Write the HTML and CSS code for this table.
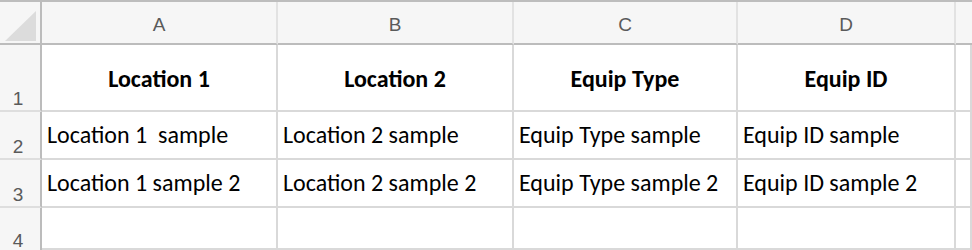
FILE: index.html
```html
<!DOCTYPE html>
<html>
<head>
<meta charset="utf-8">
<link rel="stylesheet" href="styles.css">
</head>
<body>
<div class="sheet">
  <div class="corner"><svg class="tri" width="31" height="30" viewBox="0 0 31 30"><polygon points="0,30 31,0 31,30" fill="#dcdcdc"/></svg></div>
  <div class="colhdr">A</div>
  <div class="colhdr">B</div>
  <div class="colhdr">C</div>
  <div class="colhdr">D</div>
  <div class="colhdr last"></div>

  <div class="rowhdr">1</div>
  <div class="cell head">Location 1</div>
  <div class="cell head">Location 2</div>
  <div class="cell head">Equip Type</div>
  <div class="cell head">Equip ID</div>
  <div class="cell"></div>

  <div class="rowhdr">2</div>
  <div class="cell data">Location 1  sample</div>
  <div class="cell data">Location 2 sample</div>
  <div class="cell data">Equip Type sample</div>
  <div class="cell data">Equip ID sample</div>
  <div class="cell"></div>

  <div class="rowhdr">3</div>
  <div class="cell data">Location 1 sample 2</div>
  <div class="cell data">Location 2 sample 2</div>
  <div class="cell data">Equip Type sample 2</div>
  <div class="cell data">Equip ID sample 2</div>
  <div class="cell"></div>

  <div class="rowhdr r4">4</div>
  <div class="cell"></div>
  <div class="cell"></div>
  <div class="cell"></div>
  <div class="cell"></div>
  <div class="cell"></div>
</div>
</body>
</html>
```

FILE: styles.css
```css
html, body {
  margin: 0;
  padding: 0;
  background: #ffffff;
  overflow: hidden;
}

.sheet {
  width: 972px;
  height: 250px;
  border-top: 2px solid #bdbdbd;
  box-sizing: border-box;
  display: grid;
  grid-template-columns: 42px 236px 236px 224px 218px 1fr;
  grid-template-rows: 43px 67px 48px 48px 42px;
  overflow: hidden;
}

.corner {
  background: #f6f6f6;
  border-right: 2px solid #bcbcbc;
  border-bottom: 2px solid #bcbcbc;
  box-sizing: border-box;
  display: flex;
  align-items: flex-end;
  justify-content: flex-end;
  padding: 0 4px 2px 0;
}

.tri {
  display: block;
}

.colhdr {
  background: #f6f6f6;
  border-right: 2px solid #e2e2e2;
  border-bottom: 2px solid #bcbcbc;
  box-sizing: border-box;
  font-family: "Liberation Sans", Arial, sans-serif;
  font-size: 19px;
  color: #5a5a5a;
  display: flex;
  align-items: center;
  justify-content: center;
  padding-top: 5px;
}

.colhdr.last {
  border-right: none;
}

.rowhdr {
  background: #f6f6f6;
  border-right: 2px solid #bcbcbc;
  border-bottom: 2px solid #dedede;
  box-sizing: border-box;
  font-family: "Liberation Sans", Arial, sans-serif;
  font-size: 19px;
  color: #5a5a5a;
  display: flex;
  align-items: flex-end;
  justify-content: center;
  padding: 0 4px 2px 0;
  line-height: 1;
}

.rowhdr.r4 {
  border-bottom: none;
  padding-bottom: 0;
  align-items: flex-start;
  padding-top: 23px;
}

.cell {
  border-right: 2px solid #d9d9d9;
  border-bottom: 2px solid #d9d9d9;
  box-sizing: border-box;
  font-family: Carlito, Calibri, Lato, sans-serif;
  font-size: 24px;
  color: #000000;
  white-space: pre;
  overflow: hidden;
}

.cell.head {
  font-weight: bold;
  display: flex;
  align-items: center;
  justify-content: center;
  padding-top: 1px;
}

.cell.data {
  display: flex;
  align-items: flex-end;
  padding: 0 0 11px 5px;
  line-height: 1;
}
```
